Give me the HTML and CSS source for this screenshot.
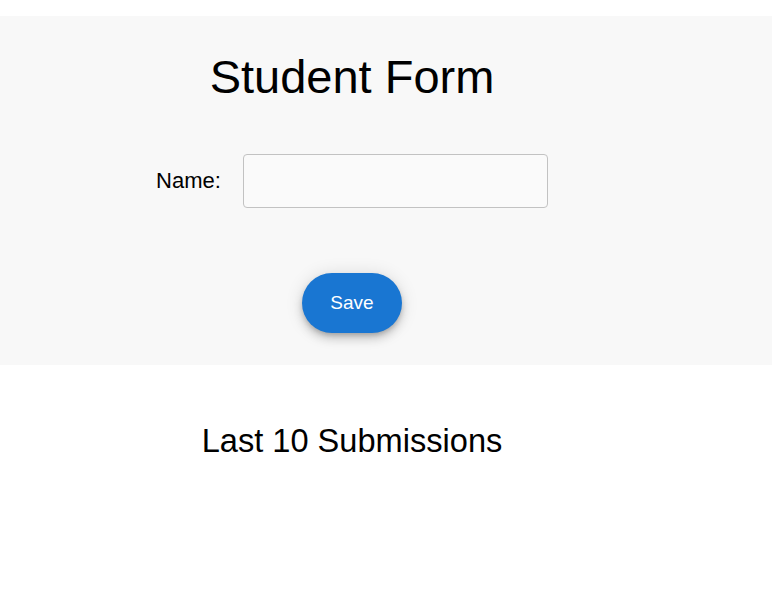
FILE: index.html
```html
<!DOCTYPE html>
<html>
<head>
<meta charset="utf-8">
<link rel="stylesheet" href="styles.css">
</head>
<body>
<section class="form-section">
  <div class="container">
    <h1 class="title">Student Form</h1>
    <div class="field-row">
      <label class="field-label" for="name">Name:</label>
      <input class="field-input" id="name" type="text">
    </div>
    <div class="actions">
      <button class="save-btn" type="button">Save</button>
    </div>
  </div>
</section>
<section class="list-section">
  <div class="container">
    <h2 class="list-title">Last 10 Submissions</h2>
  </div>
</section>
</body>
</html>
```
FILE: styles.css
```css
html, body {
  margin: 0;
  padding: 0;
  background: #ffffff;
  font-family: "Liberation Sans", Arial, sans-serif;
  color: #000;
}

body {
  padding-top: 16px;
}

.form-section {
  background: #f8f8f8;
  padding: 34px 0 32px;
}

.container {
  width: 704px;
  display: flex;
  flex-direction: column;
  align-items: center;
}

.title {
  margin: 0;
  font-size: 47px;
  font-weight: 400;
  line-height: 54px;
}

.field-row {
  margin-top: 50px;
  display: flex;
  align-items: center;
  gap: 22px;
}

.field-label {
  font-size: 22px;
  line-height: 24px;
}

.field-input {
  box-sizing: border-box;
  width: 305px;
  height: 54px;
  border: 1px solid #c2c2c2;
  border-radius: 4px;
  background: #fafafa;
  margin: 0;
  padding: 0 12px;
  font-family: inherit;
  font-size: 18px;
}

.actions {
  margin-top: 65px;
}

.save-btn {
  width: 100px;
  height: 60px;
  border: none;
  border-radius: 30px;
  background: #1976d2;
  color: #ffffff;
  font-family: "Liberation Sans", Arial, sans-serif;
  font-size: 19px;
  padding: 0;
  box-shadow: 0 3px 5px -1px rgba(0,0,0,0.2), 0 6px 10px 0 rgba(0,0,0,0.14), 0 1px 18px 0 rgba(0,0,0,0.12);
}

.list-section {
  padding-top: 57px;
}

.list-title {
  margin: 0;
  font-size: 32.6px;
  font-weight: 400;
  line-height: 38px;
}
```
